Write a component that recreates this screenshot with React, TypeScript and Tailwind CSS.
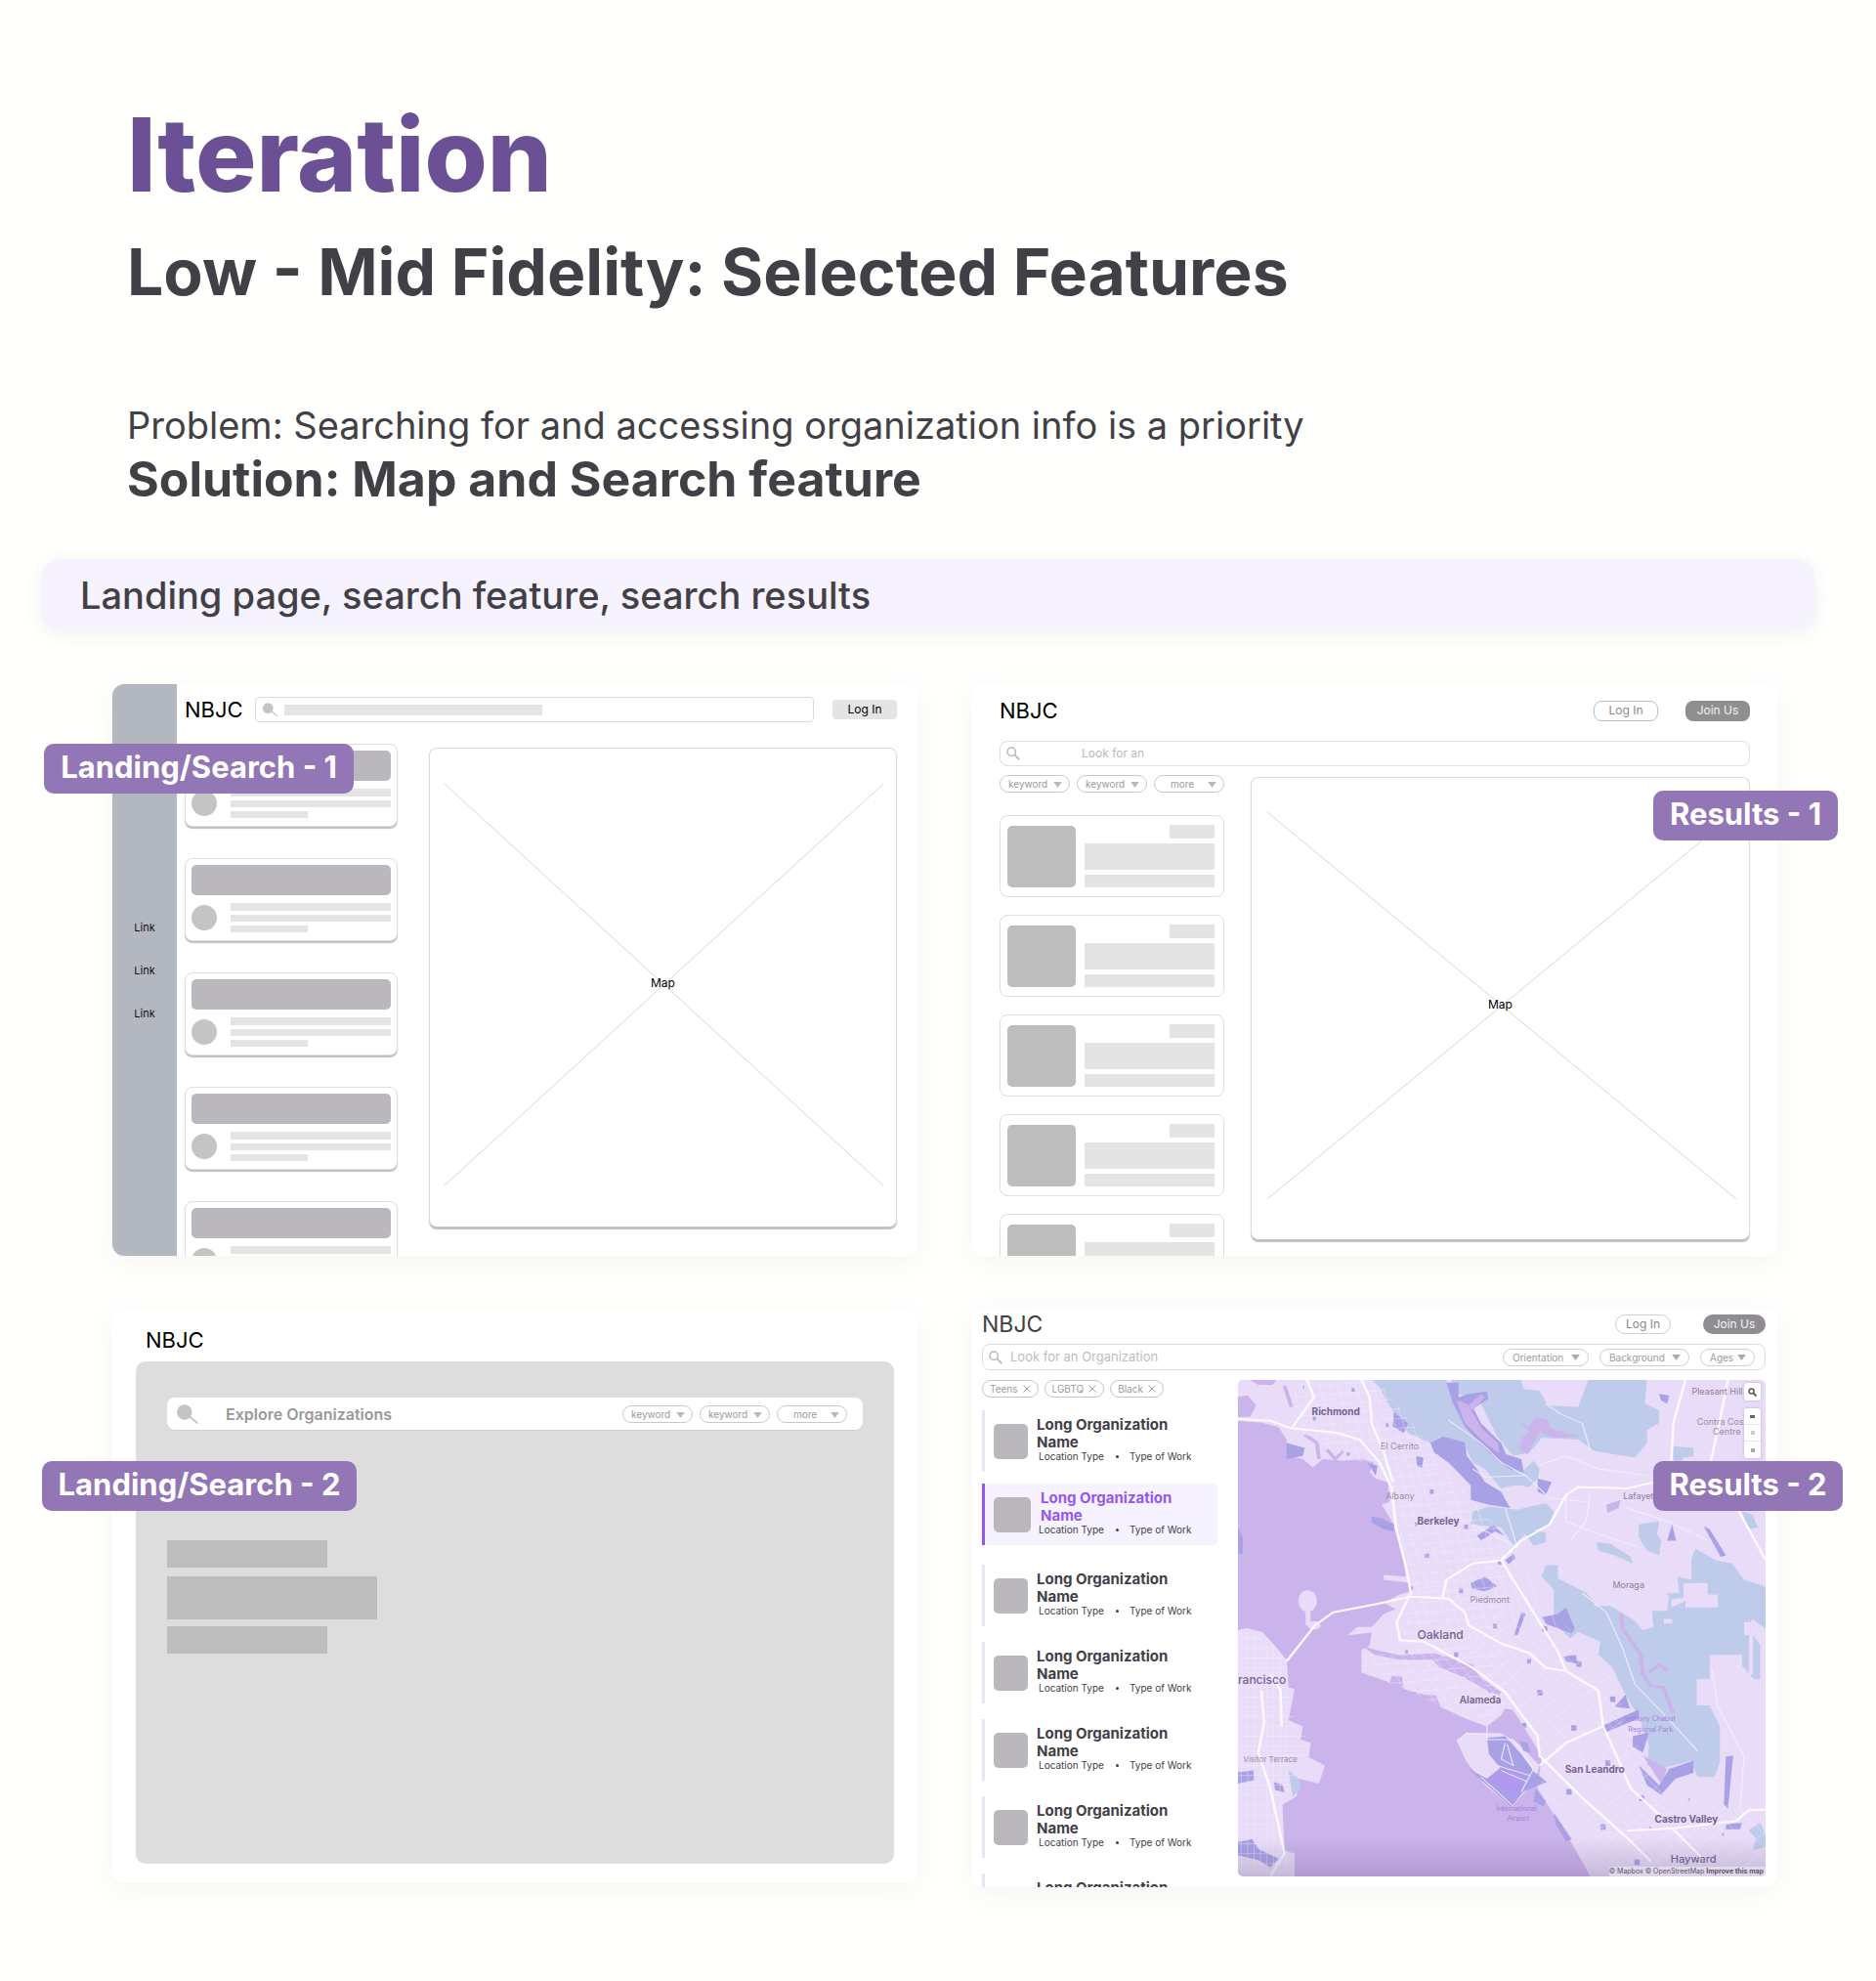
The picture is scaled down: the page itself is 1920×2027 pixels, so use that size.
import type { ReactNode } from "react";

const SANS = "font-['Inter',sans-serif]";

/* ---------- shared pieces ---------- */

function Frame({ label, labelClass, frameClass, children }: { label: string; labelClass: string; frameClass: string; children: ReactNode }) {
  return (
    <section aria-label={label} className="relative">
      <div className={`overflow-hidden rounded-xl bg-white shadow-[0_6px_30px_rgba(60,60,40,0.06)] ${frameClass}`}>{children}</div>
      <h3 className={`absolute flex h-[51px] items-center justify-center whitespace-nowrap rounded-[10px] bg-[#9376b5] pb-[2px] text-[31px] font-bold text-white ${labelClass}`}>
        {label}
      </h3>
    </section>
  );
}

function Triangle({ className = "" }: { className?: string }) {
  return (
    <svg viewBox="0 0 10 7" className={`h-[6px] w-[9px] fill-current ${className}`} aria-hidden="true">
      <path d="M0 0h10L5 7z" />
    </svg>
  );
}

function OutlineSearch() {
  return (
    <svg viewBox="0 0 14 14" className="h-[14px] w-[14px] shrink-0 text-[#b9b9b9]" fill="none" stroke="currentColor" aria-hidden="true">
      <circle cx="5.2" cy="5.2" r="4.2" strokeWidth="1.5" />
      <path d="M8.4 8.4l4.8 4.8" strokeWidth="1.9" />
    </svg>
  );
}

function SolidSearch({ className }: { className: string }) {
  return (
    <svg viewBox="0 0 22 20" className={`shrink-0 ${className}`} aria-hidden="true">
      <circle cx="7.8" cy="8" r="7.7" fill="#c4c4c4" />
      <path d="M13 12.5l8.5 7" stroke="#c4c4c4" strokeWidth="1.8" />
    </svg>
  );
}

function KeywordSelect({ text, indent, name }: { text: string; indent: string; name: string }) {
  return (
    <div className="relative h-[18px] w-[72px]">
      <select aria-label={name} className={`block h-full w-full appearance-none rounded-full border border-[#c9c9c9] bg-white text-[10px] leading-[16px] text-[#9a9a9a] ${indent}`}>
        <option>{text}</option>
      </select>
      <Triangle className="pointer-events-none absolute right-2 top-[7px] text-[#b9b9b9]" />
    </div>
  );
}

function KeywordRow() {
  return (
    <div className="flex gap-[7px]">
      <KeywordSelect name="First keyword" text="keyword" indent="pl-2" />
      <KeywordSelect name="Second keyword" text="keyword" indent="pl-2" />
      <KeywordSelect name="More filters" text="more" indent="pl-4" />
    </div>
  );
}

function MapPlaceholder({ className, crossClass }: { className: string; crossClass: string }) {
  return (
    <div className={`relative grid place-items-center rounded-lg border border-[#dcdcdc] border-b-[#c4c4c4] bg-white pb-[9px] shadow-[0_2px_1px_rgba(0,0,0,0.25)] ${className}`}>
      <svg viewBox="0 0 100 100" preserveAspectRatio="none" className={`absolute ${crossClass}`} aria-hidden="true">
        <path d="M0 0L100 100M100 0L0 100" stroke="#d6d6d6" fill="none" vectorEffect="non-scaling-stroke" />
      </svg>
      <span className="relative text-[12px] leading-4 text-black">Map</span>
    </div>
  );
}

/* ---------- Landing/Search - 1 ---------- */

function PostCard() {
  return (
    <li className="h-[85px] shrink-0 rounded-lg border border-[#dedede] bg-white px-[6px] pt-[6px] shadow-[0_2px_1px_rgba(0,0,0,0.25)]">
      <div className="h-[31px] rounded-[5px] bg-[#bbb8bd]" />
      <div className="mt-2 flex">
        <div className="mt-[2px] h-[26px] w-[26px] rounded-full bg-[#c4c4c4]" />
        <div className="ml-[14px] flex-1">
          <div className="h-2 bg-[#e4e4e4]" />
          <div className="mt-1 h-[7px] bg-[#e4e4e4]" />
          <div className="mt-1 h-[7px] w-[79px] bg-[#e4e4e4]" />
        </div>
      </div>
    </li>
  );
}

function LandingOne() {
  return (
    <Frame label="Landing/Search - 1" labelClass="-left-[70px] top-[61px] w-[317px]" frameClass="flex aspect-[824/585]">
      <nav aria-label="Wireframe links" className="flex w-[66px] shrink-0 flex-col items-center gap-7 bg-[#b3b8c0] pt-[241px] text-[11px] leading-4 text-[#111]">
        <a href="#one">Link</a>
        <a href="#two">Link</a>
        <a href="#three">Link</a>
      </nav>
      <div className="min-w-0 flex-1 pl-2 pr-[21px] pt-[13px]">
        <div className="flex h-[26px] items-center">
          <div className="w-[72px] text-[22px] leading-6 text-black">NBJC</div>
          <label className="flex h-[26px] flex-1 items-center rounded-[4px] border border-[#dcdcdc] pl-[6px]">
            <SolidSearch className="h-[14px] w-[17px]" />
            <span className="ml-[6px] h-[11px] w-[264px] bg-[#e4e4e4]" />
            <input aria-label="Search" className="min-w-0 flex-1 bg-transparent text-[12px] outline-none" />
          </label>
          <button className="ml-[19px] h-5 w-[66px] rounded-[4px] bg-[#e4e4e4] text-[12px] leading-5 text-black">Log In</button>
        </div>
        <div className="mt-[22px] flex items-start">
          <ul className="flex w-[218px] shrink-0 flex-col gap-8">
            <PostCard />
            <PostCard />
            <PostCard />
            <PostCard />
            <PostCard />
          </ul>
          <MapPlaceholder className="ml-8 mt-1 h-[491px] flex-1" crossClass="left-[15px] top-9 h-[411px] w-[calc(100%-28px)]" />
        </div>
      </div>
    </Frame>
  );
}

/* ---------- Results - 1 ---------- */

function ResultBlock() {
  return (
    <li className="flex h-[84px] shrink-0 items-center rounded-lg border border-[#dedede] bg-white pl-[7px] pr-[9px]">
      <div className="h-[63px] w-[70px] rounded-[5px] bg-[#bdbdbd]" />
      <div className="ml-[9px] flex flex-1 flex-col gap-[5px]">
        <div className="h-[14px] w-[46px] self-end bg-[#e4e4e4]" />
        <div className="h-[27px] bg-[#e4e4e4]" />
        <div className="h-[13px] bg-[#e4e4e4]" />
      </div>
    </li>
  );
}

function ResultsOne() {
  return (
    <Frame label="Results - 1" labelClass="-right-[62px] top-[109px] w-[189px]" frameClass="aspect-[824/585]">
      <div className="px-7 pt-4">
        <div className="flex h-[22px] items-center">
          <div className="mr-auto text-[22px] leading-6 text-black">NBJC</div>
          <button className="h-[21px] w-[66px] rounded-lg border border-[#bdbdbd] text-[12px] leading-[18px] text-[#8a8a8a]">Log In</button>
          <button className="ml-7 h-[21px] w-[66px] rounded-lg bg-[#8f8f8f] text-[12px] leading-[20px] text-[#f2f2f2]">Join Us</button>
        </div>
        <label className="mt-5 flex h-[26px] items-center rounded-lg border border-[#dedede] pl-[6px]">
          <OutlineSearch />
          <input aria-label="Look for an organization" placeholder="Look for an" className="ml-[63px] min-w-0 flex-1 bg-transparent text-[12px] outline-none placeholder:text-[#b9b9b9]" />
        </label>
        <div className="mt-[9px] flex items-start">
          <div className="w-[230px] shrink-0">
            <KeywordRow />
            <ul className="mt-[23px] flex flex-col gap-[18px]">
              <ResultBlock />
              <ResultBlock />
              <ResultBlock />
              <ResultBlock />
              <ResultBlock />
            </ul>
          </div>
          <MapPlaceholder className="ml-[27px] mt-[2px] h-[474px] flex-1" crossClass="left-4 top-[35px] h-[396px] w-[calc(100%-29px)]" />
        </div>
      </div>
    </Frame>
  );
}

/* ---------- Landing/Search - 2 ---------- */

function LandingTwo() {
  return (
    <Frame label="Landing/Search - 2" labelClass="-left-[72px] top-[154px] w-[322px]" frameClass="flex aspect-[824/586] flex-col px-6 pb-5 pt-[18px]">
      <div className="ml-[10px] text-[22px] leading-6 text-black">NBJC</div>
      <div className="mt-[10px] flex-1 rounded-[10px] bg-[#dddddd] px-8 pt-[37px]">
        <div className="flex h-[33px] items-center rounded-lg bg-white pl-[10px] pr-4 shadow-[0_1px_0_#cfcfcf]">
          <SolidSearch className="h-5 w-[22px]" />
          <input aria-label="Explore organizations" placeholder="Explore Organizations" className="ml-7 min-w-0 flex-1 bg-transparent text-[16px] font-semibold outline-none placeholder:text-[#999999]" />
          <KeywordRow />
        </div>
        <div className="mt-[113px] h-[28px] w-[164px] bg-[#bdbdbd]" />
        <div className="mt-[9px] h-[44px] w-[215px] bg-[#bdbdbd]" />
        <div className="mt-[7px] h-[28px] w-[164px] bg-[#bdbdbd]" />
      </div>
    </Frame>
  );
}

/* ---------- Results - 2 ---------- */

function FilterSelect({ text, width }: { text: string; width: string }) {
  return (
    <div className={`relative h-[18px] ${width}`}>
      <select aria-label={text} className="block h-full w-full appearance-none rounded-full border border-[#cfcfcf] bg-white pl-[9px] text-[10px] leading-[16px] text-[#9b9b9b]">
        <option>{text}</option>
      </select>
      <Triangle className="pointer-events-none absolute right-[9px] top-[6px] text-[#a9a9ab]" />
    </div>
  );
}

function FilterTag({ text }: { text: string }) {
  return (
    <button className="flex h-[18px] items-center gap-[5px] rounded-full border border-[#c4c4c4] px-[7px] text-[10px] text-[#9b9b9b]">
      {text}
      <svg viewBox="0 0 8 8" className="h-2 w-2" aria-hidden="true">
        <path d="M.5.5l7 7M7.5.5l-7 7" stroke="#a5a5a5" strokeWidth="1" />
      </svg>
    </button>
  );
}

function OrgRow({ active = false }: { active?: boolean }) {
  return (
    <li className={`flex h-[63px] shrink-0 items-center border-l-[3px] ${active ? "mb-1 -mt-1 rounded-r border-[#9459ea] bg-[#f6f2ff]" : "border-[#e8e6ef]"}`}>
      <div className={`ml-[9px] h-9 shrink-0 rounded-[5px] bg-[#bbb8bd] ${active ? "w-[38px]" : "w-[35px]"}`} />
      <div className={`pb-1 ${active ? "ml-[6px]" : "ml-[9px]"}`}>
        <h4 className={`text-[15px] font-bold leading-[18px] ${active ? "pl-1 text-[#9459ea]" : "text-[#424046]"}`}>
          Long Organization
          <br />
          Name
        </h4>
        <p className="flex items-center pl-[2px] text-[10px] leading-[11px] text-[#424046]">
          <span className="w-[79px]">Location Type</span>
          <span className="mr-[11px] h-[3px] w-[3px] rounded-full bg-[#424046]" />
          Type of Work
        </p>
      </div>
    </li>
  );
}

const WATER = "#cbb3ec";
const PARK = "#bfcbea";
const GROVE = "#a9a1e6";
const LAND = "#e8dcf8";

const parks = [
  "M370 247H555L570 300L580 320L600 370L650 440L680 490L740 530L770 495L785 520L780 550L760 575L720 570L690 580L650 520L620 500L600 450L540 420L515 440L460 410L410 320L390 270Z",
  "M565 247H740L745 275L785 280L805 325L880 330L905 247H1050L1045 320L1080 340L1080 380L1050 400L1050 440L1020 485L920 465L880 430L790 425L760 470L720 480L680 420L640 320L585 290Z",
  "M620 650L660 635L730 645L800 625L820 650L810 690L770 710L800 715L800 745L770 755L750 720L720 755L690 700L615 690Z",
  "M1030 690L1080 680L1075 720L1085 740L1080 785L1050 770L1030 730Z",
  "M925 745L960 750L1010 790L1015 810L970 785L930 770Z",
  "M1115 450L1165 455L1165 480L1140 485L1130 510L1115 490Z",
  "M1285 650L1310 660L1325 700L1300 705Z",
  "M1170 765L1220 800L1260 810L1290 860L1343 880V1010L1310 980L1300 1010L1330 1060V1165L1315 1165L1285 1125V1090H1205V1165H1173V1245H1205L1230 1310V1420L1217 1465H1175L1160 1415L1080 1440L1050 1430L1055 1370L1030 1280L1000 1220L965 1130L930 1090L935 1050L880 1020L860 1040L820 990V890L790 850L800 815H830V855L900 900L930 940L1010 910L1130 900L1125 850L1160 860L1160 795Z",
  "M165 1445L190 1470L195 1500L175 1525Z",
  "M1300 1630L1330 1605L1343 1640V1680L1310 1690L1320 1655Z",
];

const clearings = [
  "M920 940V895L1080 890L1105 910L1100 955H1062L1066 1005L1040 1015L1020 985L960 940Z",
  "M1110 945V920L1140 915V870H1200V905H1225V945H1145V925Z",
  "M1092 980h20v14h-20z",
  "M1290 990h22v160h-10v-120h-12z",
  "M700 580L740 570L780 590L790 615L740 640L715 635Z",
];

const groves = [
  "M555 255H585V300L610 290L655 282L658 305L622 335L640 380L690 440L702 475L740 490L746 532L710 520L660 470L600 390L570 315Z",
  "M515 440L545 420L600 438L605 480L630 520L650 560L690 590L712 640L660 630L615 615L615 570L560 500L525 470Z",
  "M615 870L650 850L680 880L650 895L618 888Z",
  "M630 725L670 692L700 725L675 712L640 740Z",
  "M700 800L720 780L725 795L708 812Z",
  "M790 975L830 965L850 945L872 1010L865 1025L800 995Z",
  "M845 1095L875 1090L878 1118L850 1110Z",
  "M938 1310L990 1280L1030 1258V1285L945 1330Z",
  "M970 1250L997 1212L1008 1255Z",
  "M1015 1340L1055 1328L1040 1390L1015 1372Z",
  "M1030 1430L1080 1490L1105 1440L1165 1415V1452L1120 1470L1085 1520L1050 1490Z",
  "M1245 1402L1263 1400L1250 1562L1240 1550Z",
  "M655 1345L700 1340L740 1395L772 1450L803 1480L745 1510L715 1557L610 1440L655 1470L690 1440L660 1395Z",
  "M735 1355L755 1360L762 1390L745 1385Z",
  "M775 1500L800 1540L795 1555L770 1540Z",
  "M820 1575L865 1655L850 1662L825 1610Z",
  "M40 1665L75 1655L90 1685L140 1715L120 1742L90 1720L40 1705Z",
  "M40 1450L78 1445L80 1475L40 1485Z",
  "M128 1480L150 1490L155 1512L132 1505Z",
  "M160 440L205 455L200 480L160 490Z",
  "M425 345L460 380L450 410L422 390Z",
  "M480 480L498 485L495 515L482 512Z",
  "M1190 695L1205 705L1245 785L1232 790Z",
  "M1100 740L1112 690L1122 740Z",
  "M370 665L395 672L425 690L425 712L400 705L370 685Z",
  "M40 700L52 730V780H40Z",
  "M740 960L750 965L730 1030L722 1030Z",
  "M1245 1610L1285 1605L1280 1625L1245 1625Z",
  "M780 550L815 560L800 600L780 590Z",
  "M1080 290L1105 295L1100 320L1085 310Z",
  "M360 500L385 510L380 540Z",
];

const inlets = [
  "M40 298L65 295L85 325L70 360L40 360Z",
  "M70 247H135L125 262H90Z",
  "M580 310L605 320L625 360L645 400L682 440L685 472L650 440L600 380Z",
  "M605 330L640 290L650 300L620 340Z",
  "M735 375L757 390L775 362L806 370L812 395L880 420L820 425L785 408L755 475L735 460L742 425L762 405Z",
  "M345 1062L380 1075L440 1092L525 1086L560 1098L620 1120L640 1160L690 1205L685 1215L640 1190L600 1160L540 1130L520 1105L440 1105L380 1092Z",
  "M950 630L985 615L980 640L952 655Z",
  "M1040 1400L1100 1440L1085 1485Z",
];

const majorRoads = [
  "M40 367L120 372L170 395L280 408L340 430L390 500L420 580L430 700L455 820L468 905",
  "M345 247L365 300L370 380L400 470L422 560",
  "M210 247L228 300L175 390",
  "M160 1110L230 1000L275 960L380 935L465 912L560 918L600 960L610 1000L690 1055L760 1085L800 1130L850 1140L930 1200L942 1310L975 1400L1010 1500L1080 1580",
  "M465 905L432 990L440 1045L500 1050L620 1130L700 1205L780 1340L785 1400L900 1540L1000 1650L1060 1725",
  "M545 915L555 860L620 810L690 800L740 740L810 690L850 600L880 575L1000 580L1070 560L1180 560L1260 610L1343 800",
  "M690 800L750 920L830 1080L850 1140",
  "M1110 500L1115 380L1145 247M1200 540L1225 400L1250 247",
  "M1000 1630L1120 1622L1270 1600L1300 1568L1343 1565M1110 1620L1200 1730",
  "M98 1200L105 1300L90 1390L120 1500L155 1700L120 1768M148 1310L145 1200L120 1150",
  "M785 1430L850 1360L940 1310",
];

const minorRoads = [
  "M560 370L640 440L690 500L750 540L650 545L620 520",
  "M800 320L835 350L890 380L905 440L910 465",
  "M890 900L950 960L990 1070L1020 1180L1090 1270L1175 1385",
  "M750 540L810 610L900 620",
  "M850 600L850 680L930 720L1030 760",
  "M1000 640L1100 680L1200 740",
  "M910 600L900 680L860 740",
  "M700 640L715 700L730 760L620 690",
  "M780 510L850 480L930 520L1050 540",
  "M1210 1130L1225 1250L1290 1400L1280 1560",
  "M655 1310V1350L720 1350L770 1440L740 1510M700 1360L690 1410L720 1430L705 1365M680 1430L760 1460M690 1445L755 1480M640 1465L720 1555",
  "M580 1355L605 1330L655 1335",
];

const specks = Array.from({ length: 90 }, (_, i) => ({
  x: 200 + ((i * 277) % 1120),
  y: 265 + ((i * 419) % 1480),
  s: 4 + (i % 4) * 3,
}));

const EAST = "M180 247H380L520 450L620 620L700 720L820 960L960 1150L1010 1330L1100 1520L1343 1560V1768H910L870 1680L790 1500L790 1400L740 1300L700 1240L655 1310L540 1250L450 1195L345 1145V1085L430 1090L470 905L430 700L400 520L300 480L180 400Z";
const CITY = "M40 1010L100 1020L160 1105L165 1200L180 1300L220 1360L150 1550L155 1690L180 1768H40Z";

const places = [
  { name: "Richmond", at: "left-[14%] top-[5%]", look: "text-[10px] font-bold text-[#75628f]" },
  { name: "El Cerrito", at: "left-[27%] top-[12%]", look: "text-[9px] text-[#9a8cad]" },
  { name: "Albany", at: "left-[28%] top-[22%]", look: "text-[9px] text-[#9a8cad]" },
  { name: "Berkeley", at: "left-[34%] top-[27%]", look: "text-[10px] font-bold text-[#75628f]" },
  { name: "Pleasant Hill", at: "left-[86%] top-[1%]", look: "text-[9px] text-[#8c7d9f]" },
  { name: "Contra Costa", at: "left-[87%] top-[7%]", look: "text-[9px] text-[#9a8cad]" },
  { name: "Centre", at: "left-[90%] top-[9%]", look: "text-[9px] text-[#9a8cad]" },
  { name: "Lafayette", at: "left-[73%] top-[22%]", look: "text-[9px] text-[#8c7d9f]" },
  { name: "Moraga", at: "left-[71%] top-[40%]", look: "text-[9px] text-[#8c7d9f]" },
  { name: "Piedmont", at: "left-[44%] top-[43%]", look: "text-[9px] text-[#9a8cad]" },
  { name: "Oakland", at: "left-[34%] top-[50%]", look: "text-[12px] font-medium text-[#75628f]" },
  { name: "rancisco", at: "left-0 top-[59%]", look: "text-[12px] font-medium text-[#75628f]" },
  { name: "Alameda", at: "left-[42%] top-[63%]", look: "text-[10px] font-semibold text-[#75628f]" },
  { name: "Visitor Terrace", at: "left-[1%] top-[75%]", look: "text-[8px] text-[#9a8cad]" },
  { name: "Anthony Chabot", at: "left-[73%] top-[67%]", look: "text-[7px] text-[#a77fd8]" },
  { name: "Regional Park", at: "left-[74%] top-[69%]", look: "text-[7px] text-[#a77fd8]" },
  { name: "San Leandro", at: "left-[62%] top-[77%]", look: "text-[10px] font-bold text-[#75628f]" },
  { name: "International", at: "left-[49%] top-[85%]", look: "text-[7px] text-[#a77fd8]" },
  { name: "Airport", at: "left-[51%] top-[87%]", look: "text-[7px] text-[#a77fd8]" },
  { name: "Castro Valley", at: "left-[79%] top-[87%]", look: "text-[10px] font-bold text-[#75628f]" },
  { name: "Hayward", at: "left-[82%] top-[95%]", look: "text-[11px] font-medium text-[#75628f]" },
];

function BayMap() {
  return (
    <div className="relative h-[508px] flex-1 overflow-hidden rounded-[5px] bg-[#e8dcf8]">
      <svg viewBox="40 247 1303 1523" preserveAspectRatio="none" className="absolute inset-0 h-full w-full" role="img" aria-label="Map of the East Bay">
        <defs>
          <clipPath id="streets">
            <path d={EAST} />
            <path d={CITY} />
          </clipPath>
          <linearGradient id="fade" x1="0" y1="0" x2="0" y2="1">
            <stop offset="0" stopColor="#6b5a8a" stopOpacity="0" />
            <stop offset="1" stopColor="#6b5a8a" stopOpacity="0.28" />
          </linearGradient>
        </defs>
        <path
          fill={WATER}
          d="M40 372L100 378L140 392L160 430L165 480L200 490L225 515L250 490L300 495L350 490L375 500L365 530L380 550L410 560L415 620L395 630L425 690L440 760L450 810L455 850L400 845L400 860L460 868L465 895L440 905L400 930L430 950L400 965L370 1005L335 1005L310 1030L370 1022L365 1062L345 1075V1145L415 1175L420 1155L445 1158L450 1195L500 1212L530 1215L540 1250L600 1285L655 1310L690 1275L700 1255L720 1260L740 1300L790 1400L780 1500L820 1580L870 1680L910 1770H180V1700L155 1690L150 1550L185 1525L190 1470L240 1485L255 1430L215 1405L220 1360L195 1350L200 1310L165 1290L180 1195L165 1190L160 1105L130 1060L100 1020L60 1008L40 1015Z"
        />
        <g fill={LAND}>
          <path d="M580 1355L605 1330L690 1330L735 1365L785 1430L772 1480L715 1557L650 1490L605 1420Z" />
          <ellipse cx="212" cy="925" rx="23" ry="33" />
          <ellipse cx="228" cy="1000" rx="16" ry="13" />
          <path d="M207 950h12v50h-12z" />
        </g>
        <g fill={PARK}>{parks.map((d) => <path key={d} d={d} />)}</g>
        <g fill={LAND}>{clearings.map((d) => <path key={d} d={d} />)}</g>
        <g fill={GROVE}>
          {groves.map((d) => <path key={d} d={d} />)}
          <g clipPath="url(#streets)">
            {specks.map((p, i) => <rect key={i} x={p.x} y={p.y} width={p.s} height={p.s + 4} />)}
          </g>
        </g>
        <path d="M655 1470L690 1435L740 1455L745 1500L715 1530Z" fill="#b09af0" />
        <g fill={WATER}>{inlets.map((d) => <path key={d} d={d} />)}</g>
        <path d="M985 965L990 1010L1035 1090L1040 1150L1060 1185L1090 1190L1115 1270M1055 1145L1080 1120L1100 1140M1040 1090L1030 1120" fill="none" stroke={WATER} strokeWidth="9" />
        <path d="M155 265L172 330M205 415L235 440L240 490M260 460L280 490L300 465" fill="none" stroke={WATER} strokeWidth="9" />
        <g fill="none" stroke="#f7f1fe" clipPath="url(#streets)" strokeOpacity="0.5" strokeWidth="2">
          {Array.from({ length: 30 }, (_, i) => (
            <path key={`a${i}`} d={`M${40 + i * 22} 247L${200 + i * 24} 1000L${560 + i * 34} 1768`} />
          ))}
          {Array.from({ length: 36 }, (_, i) => (
            <path key={`b${i}`} d={`M180 ${270 + i * 30}L700 ${220 + i * 30}`} />
          ))}
          {Array.from({ length: 26 }, (_, i) => (
            <path key={`c${i}`} d={`M${380 + i * 34} ${1250 + i * 24}L${700 + i * 34} ${950 + i * 24}`} />
          ))}
          {Array.from({ length: 24 }, (_, i) => (
            <path key={`d${i}`} d={`M40 ${1040 + i * 30}H230`} />
          ))}
          {Array.from({ length: 8 }, (_, i) => (
            <path key={`e${i}`} d={`M${48 + i * 16} 1000V1768`} />
          ))}
        </g>
        <g fill="none" stroke="#f6f0fe" strokeLinejoin="round" strokeOpacity="0.85" strokeWidth="3">
          {minorRoads.map((d) => <path key={d} d={d} />)}
        </g>
        <g fill="none" stroke="#fcfaff" strokeLinejoin="round" strokeWidth="6">
          {majorRoads.map((d) => <path key={d} d={d} />)}
        </g>
        <rect x="40" y="1650" width="1303" height="120" fill="url(#fade)" />
      </svg>
      {places.map((p) => (
        <span key={p.name} className={`absolute whitespace-nowrap leading-[14px] ${p.at} ${p.look}`}>
          {p.name}
        </span>
      ))}
      <div className="absolute right-[5px] top-[3px] flex w-[17px] flex-col gap-2">
        <button aria-label="Search map" className="grid h-[18px] place-items-center rounded-[3px] bg-white shadow-[0_0_3px_#b9a6d6]">
          <svg viewBox="0 0 10 10" className="h-[9px] w-[9px]" fill="none" stroke="#555" aria-hidden="true">
            <circle cx="4" cy="4" r="2.8" strokeWidth="1.6" />
            <path d="M6 6l3.4 3.4" strokeWidth="2" />
          </svg>
        </button>
        <div className="flex flex-col divide-y divide-gray-200 rounded-[3px] bg-white shadow-[0_0_3px_#b9a6d6]">
          <button aria-label="Zoom in" className="grid h-[17px] place-items-center"><span className="h-[3px] w-[5px] bg-[#666]" /></button>
          <button aria-label="Zoom out" className="grid h-[17px] place-items-center"><span className="h-[4px] w-[4px] bg-[#ccc]" /></button>
          <button aria-label="Reset north" className="grid h-[17px] place-items-center"><span className="h-[4px] w-[4px] bg-[#aaa]" /></button>
        </div>
      </div>
      <p className="absolute bottom-0 right-0 whitespace-nowrap bg-white/40 pr-[2px] text-[7px] leading-[10px] text-[#5c5468]">
        © Mapbox © OpenStreetMap <a href="#improve" className="font-bold">Improve this map</a>
      </p>
    </div>
  );
}

function ResultsTwo() {
  return (
    <Frame label="Results - 2" labelClass="-right-[67px] top-[157px] w-[194px]" frameClass="aspect-[824/593]">
      <div className="pl-[10px] pr-3 pt-[6px]">
        <div className="flex h-[22px] items-center">
          <div className="mr-auto text-[23px] leading-6 text-[#424046]">NBJC</div>
          <button className="h-[20px] w-[57px] rounded-full border border-[#cfcfcf] text-[12px] leading-[18px] text-[#8a888d]">Log In</button>
          <button className="ml-[33px] h-[20px] w-[64px] rounded-full bg-[#8f8d92] text-[12px] leading-[20px] text-[#f4f4f4]">Join Us</button>
        </div>
        <div className="mt-[9px] flex h-[27px] items-center rounded-lg border border-[#dcdcdc] pl-[6px] pr-[10px]">
          <OutlineSearch />
          <input aria-label="Look for an organization" placeholder="Look for an Organization" className="ml-2 min-w-0 flex-1 bg-transparent text-[13px] outline-none placeholder:text-[#bdbdbd]" />
          <div className="flex gap-[11px]">
            <FilterSelect text="Orientation" width="w-[88px]" />
            <FilterSelect text="Background" width="w-[92px]" />
            <FilterSelect text="Ages" width="w-[56px]" />
          </div>
        </div>
        <div className="mt-[10px] flex items-start">
          <div className="w-[262px] shrink-0">
            <div className="flex gap-[6px]">
              <FilterTag text="Teens" />
              <FilterTag text="LGBTQ" />
              <FilterTag text="Black" />
            </div>
            <ul className="mr-[21px] mt-[13px] flex flex-col gap-4">
              <OrgRow />
              <OrgRow active />
              <OrgRow />
              <OrgRow />
              <OrgRow />
              <OrgRow />
              <OrgRow />
            </ul>
          </div>
          <BayMap />
        </div>
      </div>
    </Frame>
  );
}

export default function App() {
  return (
    <main className={`min-h-screen bg-[#fffffd] pb-24 pt-[110px] text-[#424046] ${SANS}`}>
      <header className="px-[130px]">
        <h1 className="text-[104px] font-extrabold leading-[96px] text-[#6b5096]">Iteration</h1>
        <h2 className="mt-8 text-[66px] font-bold leading-[80px]">Low - Mid Fidelity: Selected Features</h2>
        <p className="mt-[93px] text-[38px] leading-[48px]">Problem: Searching for and accessing organization info is a priority</p>
        <p className="text-[50px] font-bold leading-[62px]">Solution: Map and Search feature</p>
      </header>
      <div className="ml-[42px] mr-[62px] mt-[51px] flex h-[74px] items-center rounded-[20px] bg-[#f6f3ff] px-10 shadow-[0_4px_20px_rgba(60,60,40,0.07)]">
        <h2 className="text-[38px] font-medium leading-[48px]">Landing page, search feature, search results</h2>
      </div>
      <div className="ml-[115px] mr-[101px] mt-[54px] grid grid-cols-2 gap-14">
        <div className="flex flex-col gap-14">
          <LandingOne />
          <LandingTwo />
        </div>
        <div className="flex flex-col gap-[53px]">
          <ResultsOne />
          <ResultsTwo />
        </div>
      </div>
    </main>
  );
}
